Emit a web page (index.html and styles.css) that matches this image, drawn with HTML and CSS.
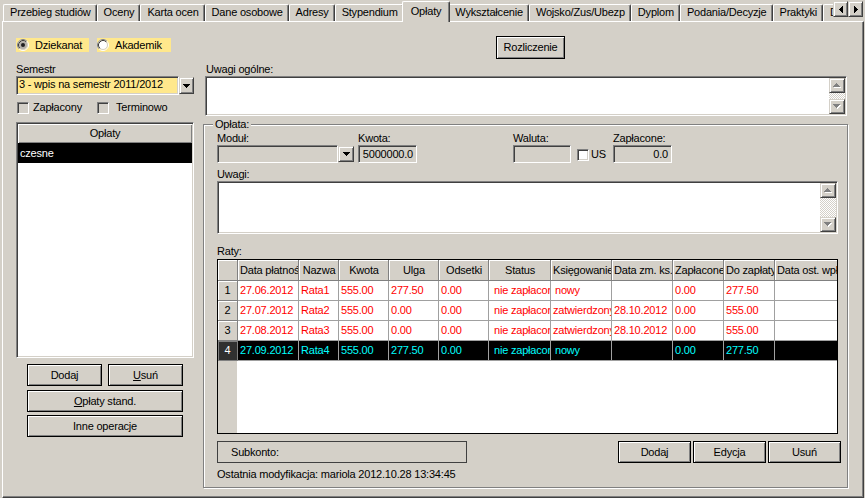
FILE: index.html
```html
<!DOCTYPE html>
<html lang="pl">
<head>
<meta charset="utf-8">
<title>Opłaty</title>
<link rel="stylesheet" href="styles.css">
</head>
<body>
<div class="app">
  <div class="tabbar">
    <div class="tablist">
      <div class="tab">Przebieg studiów</div>
      <div class="tab">Oceny</div>
      <div class="tab">Karta ocen</div>
      <div class="tab">Dane osobowe</div>
      <div class="tab">Adresy</div>
      <div class="tab">Stypendium</div>
      <div class="tab active">Opłaty</div>
      <div class="tab">Wykształcenie</div>
      <div class="tab">Wojsko/Zus/Ubezp</div>
      <div class="tab">Dyplom</div>
      <div class="tab">Podania/Decyzje</div>
      <div class="tab">Praktyki</div>
      <div class="tab">Dokumenty</div>
    </div>
    <div class="tabscroll">
      <div class="raised arrowbtn"><svg width="4" height="7" viewBox="0 0 4 7"><path d="M3 0h1v7H3zM2 1h1v5H2zM1 2h1v3H1zM0 3h1v1H0z"/></svg></div>
      <div class="raised arrowbtn"><svg width="4" height="7" viewBox="0 0 4 7"><path d="M0 0h1v7H0zM1 1h1v5H1zM2 2h1v3H2zM3 3h1v1H3z"/></svg></div>
    </div>
  </div>
  <div class="page">
    <div class="leftcol">
      <div class="radios">
        <div class="radio radio-dz">
          <svg class="rb" width="12" height="12" viewBox="0 0 12 12"><circle cx="6" cy="6" r="4.5" fill="#b4b0a8"/><circle cx="6" cy="6" r="5.5" fill="none" stroke="#fff"/><path d="M2.11 9.89A5.5 5.5 0 0 1 9.89 2.11" fill="none" stroke="#808080"/><circle cx="6" cy="6" r="4.5" fill="none" stroke="#d4d0c8"/><path d="M2.82 9.18A4.5 4.5 0 0 1 9.18 2.82" fill="none" stroke="#404040"/><circle cx="6" cy="6" r="2" fill="#202020"/></svg>
          <span>Dziekanat</span>
        </div>
        <div class="radio radio-ak">
          <svg class="rb" width="12" height="12" viewBox="0 0 12 12"><circle cx="6" cy="6" r="4.5" fill="#fff"/><circle cx="6" cy="6" r="5.5" fill="none" stroke="#fff"/><path d="M2.11 9.89A5.5 5.5 0 0 1 9.89 2.11" fill="none" stroke="#808080"/><circle cx="6" cy="6" r="4.5" fill="none" stroke="#d4d0c8"/><path d="M2.82 9.18A4.5 4.5 0 0 1 9.18 2.82" fill="none" stroke="#404040"/></svg>
          <span>Akademik</span>
        </div>
      </div>
      <div class="lbl sem-lbl">Semestr</div>
      <div class="combo combo-sem">
        <div class="sunken combo-field yellow">3 - wpis na semestr 2011/2012</div>
        <div class="raised combo-btn"><svg width="7" height="4" viewBox="0 0 7 4"><path d="M0 0h7v1H0zM1 1h5v1H1zM2 2h3v1H2zM3 3h1v1H3z"/></svg></div>
      </div>
      <div class="checks">
        <div class="check check-zap"><span class="sunken cbox"></span><span>Zapłacony</span></div>
        <div class="check"><span class="sunken cbox"></span><span>Terminowo</span></div>
      </div>
      <div class="sunken list">
        <div class="list-head">Opłaty</div>
        <div class="list-row selected">czesne</div>
      </div>
      <div class="btnrow">
        <div class="btn btn-half">Dodaj</div>
        <div class="btn btn-half"><u>U</u>suń</div>
      </div>
      <div class="btn btn-wide btn-stand"><u>O</u>płaty stand.</div>
      <div class="btn btn-wide btn-inne">Inne operacje</div>
    </div>

    <div class="rightcol">
      <div class="btn btn-rozl">Rozliczenie</div>
      <div class="lbl og-lbl">Uwagi ogólne:</div>
      <div class="sunken memo memo-og">
        <div class="vscroll">
          <div class="raised vs-btn"><svg width="8" height="5" viewBox="0 0 8 5"><path fill="#fff" d="M4 1h1v1H4zM3 2h3v1H3zM2 3h5v1H2zM1 4h7v1H1z"/><path fill="#808080" d="M3 0h1v1H3zM2 1h3v1H2zM1 2h5v1H1zM0 3h7v1H0z"/></svg></div>
          <div class="vs-track"></div>
          <div class="raised vs-btn"><svg width="8" height="5" viewBox="0 0 8 5"><path fill="#fff" d="M1 1h7v1H1zM2 2h5v1H2zM3 3h3v1H3zM4 4h1v1H4z"/><path fill="#808080" d="M0 0h7v1H0zM1 1h5v1H1zM2 2h3v1H2zM3 3h1v1H3z"/></svg></div>
        </div>
      </div>

      <div class="group">
        <div class="group-title">Opłata:</div>
        <div class="field-row">
          <div class="fblock">
            <div class="lbl">Moduł:</div>
            <div class="combo combo-mod">
              <div class="sunken combo-field"></div>
              <div class="raised combo-btn"><svg width="7" height="4" viewBox="0 0 7 4"><path d="M0 0h7v1H0zM1 1h5v1H1zM2 2h3v1H2zM3 3h1v1H3z"/></svg></div>
            </div>
          </div>
          <div class="fblock fb-kwota">
            <div class="lbl">Kwota:</div>
            <div class="sunken edit edit-kwota">5000000.0</div>
          </div>
          <div class="fblock fb-waluta">
            <div class="lbl">Waluta:</div>
            <div class="sunken edit edit-waluta"></div>
          </div>
          <div class="check check-us"><span class="sunken cbox white"></span><span>US</span></div>
          <div class="fblock">
            <div class="lbl">Zapłacone:</div>
            <div class="sunken edit edit-zap">0.0</div>
          </div>
        </div>

        <div class="lbl uw-lbl">Uwagi:</div>
        <div class="sunken memo memo-uw">
          <div class="vscroll">
            <div class="raised vs-btn"><svg width="8" height="5" viewBox="0 0 8 5"><path fill="#fff" d="M4 1h1v1H4zM3 2h3v1H3zM2 3h5v1H2zM1 4h7v1H1z"/><path fill="#808080" d="M3 0h1v1H3zM2 1h3v1H2zM1 2h5v1H1zM0 3h7v1H0z"/></svg></div>
            <div class="vs-track"></div>
            <div class="raised vs-btn"><svg width="8" height="5" viewBox="0 0 8 5"><path fill="#fff" d="M1 1h7v1H1zM2 2h5v1H2zM3 3h3v1H3zM4 4h1v1H4z"/><path fill="#808080" d="M0 0h7v1H0zM1 1h5v1H1zM2 2h3v1H2zM3 3h1v1H3z"/></svg></div>
          </div>
        </div>

        <div class="lbl raty-lbl">Raty:</div>
        <div class="grid">
          <div class="grow ghead">
            <div class="gc gh"></div>
            <div class="gc gh">Data płatności</div>
            <div class="gc gh">Nazwa</div>
            <div class="gc gh">Kwota</div>
            <div class="gc gh">Ulga</div>
            <div class="gc gh">Odsetki</div>
            <div class="gc gh">Status</div>
            <div class="gc gh">Księgowanie</div>
            <div class="gc gh">Data zm. ks.</div>
            <div class="gc gh">Zapłacone</div>
            <div class="gc gh">Do zapłaty</div>
            <div class="gc gh">Data ost. wpłaty</div>
          </div>
          <div class="grow">
            <div class="gc gi">1</div>
            <div class="gc">27.06.2012</div>
            <div class="gc">Rata1</div>
            <div class="gc">555.00</div>
            <div class="gc">277.50</div>
            <div class="gc">0.00</div>
            <div class="gc ind">nie zapłacono</div>
            <div class="gc ind2">nowy</div>
            <div class="gc"></div>
            <div class="gc">0.00</div>
            <div class="gc">277.50</div>
            <div class="gc"></div>
          </div>
          <div class="grow">
            <div class="gc gi">2</div>
            <div class="gc">27.07.2012</div>
            <div class="gc">Rata2</div>
            <div class="gc">555.00</div>
            <div class="gc">0.00</div>
            <div class="gc">0.00</div>
            <div class="gc ind">nie zapłacono</div>
            <div class="gc">zatwierdzony</div>
            <div class="gc">28.10.2012</div>
            <div class="gc">0.00</div>
            <div class="gc">555.00</div>
            <div class="gc"></div>
          </div>
          <div class="grow">
            <div class="gc gi">3</div>
            <div class="gc">27.08.2012</div>
            <div class="gc">Rata3</div>
            <div class="gc">555.00</div>
            <div class="gc">0.00</div>
            <div class="gc">0.00</div>
            <div class="gc ind">nie zapłacono</div>
            <div class="gc">zatwierdzony</div>
            <div class="gc">28.10.2012</div>
            <div class="gc">0.00</div>
            <div class="gc">555.00</div>
            <div class="gc"></div>
          </div>
          <div class="grow sel">
            <div class="gc gi">4</div>
            <div class="gc">27.09.2012</div>
            <div class="gc">Rata4</div>
            <div class="gc">555.00</div>
            <div class="gc">277.50</div>
            <div class="gc">0.00</div>
            <div class="gc ind">nie zapłacono</div>
            <div class="gc ind2">nowy</div>
            <div class="gc"></div>
            <div class="gc">0.00</div>
            <div class="gc">277.50</div>
            <div class="gc"></div>
          </div>
        </div>

        <div class="bottom-row">
          <div class="subkonto">Subkonto:</div>
          <div class="btn bbtn bbtn-first">Dodaj</div>
          <div class="btn bbtn">Edycja</div>
          <div class="btn bbtn">Usuń</div>
        </div>
        <div class="lbl footer">Ostatnia modyfikacja: mariola 2012.10.28 13:34:45</div>
      </div>
    </div>
  </div>
</div>
</body>
</html>
```

FILE: styles.css
```css
* { box-sizing: border-box; }
html, body { margin: 0; padding: 0; }
body {
  background: #d4d0c8;
  font: 11px/13px "Liberation Sans", Arial, sans-serif;
  letter-spacing: -0.2px;
  color: #000;
  width: 865px;
  height: 498px;
  overflow: hidden;
}
.app { width: 865px; height: 498px; display: flex; flex-direction: column; }

/* common 3D styles */
.raised {
  background: #d4d0c8;
  border: 1px solid;
  border-color: #d4d0c8 #404040 #404040 #d4d0c8;
  box-shadow: inset 1px 1px #fff, inset -1px -1px #808080;
  display: flex; align-items: center; justify-content: center;
}
.sunken {
  border: 1px solid;
  border-color: #808080 #fff #fff #808080;
  box-shadow: inset 1px 1px #404040, inset -1px -1px #d4d0c8;
}
.btn {
  background: #d4d0c8;
  border: 1px solid #000;
  box-shadow: inset 1px 1px #fff, inset -1px -1px #808080;
  display: flex; align-items: center; justify-content: center;
  white-space: nowrap;
  height: 22px;
}
.lbl { height: 13px; line-height: 13px; white-space: nowrap; }

/* tabs */
.tabbar { display: flex; height: 21px; flex: none; }
.tablist {
  display: flex; align-items: flex-end;
  flex: 1; min-width: 0; height: 22px;
  overflow: hidden; padding-left: 3px;
}
.tab {
  flex: none;
  height: 17px;
  margin-bottom: 1px;
  padding: 0 5px 0 6px;
  line-height: 15px;
  border: 1px solid #fff;
  border-bottom: 0;
  border-right-color: #404040;
  box-shadow: inset -1px 0 #808080;
  border-radius: 2px 2px 0 0;
  white-space: nowrap;
}
.tab.active {
  height: 21px;
  margin: 0 -2px;
  padding: 2px 8px 0;
  position: relative;
  z-index: 1;
  background: #d4d0c8;
}
.tabscroll { display: flex; flex: none; margin: 1px 2px 0 0; height: 16px; }
.arrowbtn { width: 15px; height: 16px; }

/* page */
.page {
  flex: none;
  width: 862px; height: 477px;
  margin-left: 2px;
  border: 1px solid #fff;
  border-right-color: #404040;
  border-bottom-color: #404040;
  box-shadow: inset -1px -1px #808080;
  display: flex;
  padding: 14px 0 0 13px;
}

/* left column */
.leftcol { width: 178px; flex: none; padding-top: 2px; display: flex; flex-direction: column; }
.radios { display: flex; gap: 8px; height: 14px; }
.radio {
  display: flex; align-items: center; gap: 6px;
  height: 14px; padding-left: 1px;
  background: #ffe88c;
  line-height: 14px;
}
.radio-dz { width: 73px; }
.radio-ak { width: 74px; padding-left: 0; }
.rb { flex: none; }
.sem-lbl { margin-top: 11px; }
.combo { display: flex; }
.combo-field {
  flex: 1; min-width: 0;
  background: #d4d0c8;
  padding-left: 2px;
  line-height: 15px;
  white-space: nowrap; overflow: hidden;
}
.combo-field.yellow { background: #ffe88c; }
.combo-sem { height: 19px; }
.combo-sem .combo-btn { width: 15px; height: 17px; margin: 1px 0; flex: none; }
.checks { display: flex; margin-top: 6px; height: 13px; }
.check { display: flex; align-items: center; gap: 4px; }
.check-zap { width: 81px; padding-left: 1px; }
.checks .check + .check span + span { margin-left: 3px; }
.cbox { width: 12px; height: 12px; flex: none; background: #d4d0c8; }
.cbox.white { background: #fff; }
.list {
  margin-top: 8px; height: 236px;
  background: #fff;
  padding: 1px;
  display: flex; flex-direction: column;
}
.list-head {
  height: 19px;
  background: #d4d0c8;
  box-shadow: inset 1px 1px #fff, inset -1px -1px #808080;
  display: flex; align-items: center; justify-content: center;
}
.list-row { height: 20px; line-height: 20px; padding-left: 2px; }
.list-row.selected { background: #000; color: #fff; }
.btnrow { display: flex; gap: 6px; margin: 6px 0 0 11px; }
.btn-half { width: 75px; }
.btn-wide { width: 156px; margin-left: 11px; }
.btn-stand { margin-top: 4px; }
.btn-inne { margin-top: 3px; }

/* right column */
.rightcol { width: 645px; flex: none; margin-left: 9px; display: flex; flex-direction: column; }
.btn-rozl { margin-left: 293px; width: 69px; height: 23px; }
.og-lbl { margin: 4px 0 0 3px; }
.memo { background: #fff; padding: 1px; display: flex; justify-content: flex-end; }
.memo-og { margin-left: 2px; width: 642px; height: 40px; }
.vscroll { width: 16px; display: flex; flex-direction: column; }
.vs-btn { height: 15px; flex: none; }
.vs-track {
  flex: 1;
  background-image: repeating-conic-gradient(#fff 0 25%, #d4d0c8 0 50%);
  background-size: 2px 2px;
}

.group {
  margin-top: 8px;
  height: 364px;
  position: relative;
  border: 1px solid #808080;
  box-shadow: inset 1px 1px #fff, 1px 1px #fff;
  padding: 7px 0 0 13px;
}
.group-title {
  position: absolute; top: -7px; left: 9px;
  padding: 0 2px;
  background: #d4d0c8;
  line-height: 13px;
}
.field-row { display: flex; align-items: flex-end; height: 31px; }
.fblock { display: flex; flex-direction: column; }
.combo-mod { width: 137px; height: 18px; }
.combo-mod .combo-btn { width: 16px; height: 16px; margin: 1px 0; flex: none; }
.edit {
  height: 18px;
  background: #d4d0c8;
  display: flex; align-items: center; justify-content: flex-end;
  padding-right: 3px;
  white-space: nowrap; overflow: hidden;
}
.fb-kwota { margin-left: 4px; }
.edit-kwota { width: 59px; }
.fb-waluta { margin-left: 96px; }
.edit-waluta { width: 58px; }
.check-us { margin: 0 0 2px 6px; width: 36px; gap: 2px; }
.edit-zap { width: 59px; }
.uw-lbl { margin-top: 5px; }
.memo-uw { width: 621px; height: 53px; }
.raty-lbl { margin-top: 11px; height: 14px; }

/* grid */
.grid {
  width: 621px; height: 175px;
  border: 1px solid #000;
  background: linear-gradient(to right, #d4d0c8 19px, #fff 19px);
  overflow: hidden;
}
.grow {
  display: grid;
  grid-template-columns: 20px 61px 40px 50px 50px 50px 62px 61px 61px 51px 51px 62px;
  height: 20px;
  background: #fff;
}
.ghead { height: 21px; background: #d4d0c8; }
.gc {
  border-right: 1px solid #a0a0a0;
  border-bottom: 1px solid #a0a0a0;
  padding-left: 2px;
  white-space: nowrap;
  overflow: hidden;
  line-height: 19px;
  color: #f00;
}
.gc:last-child { border-right: 0; }
.gc.ind { padding-left: 5px; }
.gc.ind2 { padding-left: 4px; }
.gh {
  background: #d4d0c8;
  color: #000;
  border-color: #808080;
  box-shadow: inset 1px 1px #fff;
  text-align: center;
  padding: 0 1px 0 2px;
  line-height: 20px;
}
.gi {
  background: #d4d0c8;
  color: #000;
  border-color: #808080;
  box-shadow: inset 1px 1px #fff;
  text-align: center;
  padding: 0;
}
.grow.sel .gc { background: #000; color: #0ff; }
.grow.sel .gi { background: #303030; color: #fff; box-shadow: inset 1px 1px #808080; }

.bottom-row { display: flex; width: 624px; height: 22px; margin-top: 7px; }
.subkonto {
  width: 250px;
  border: 1px solid #404040;
  display: flex; align-items: center;
  padding-left: 13px;
}
.bbtn { width: 73px; margin-left: 2px; }
.bbtn-first { margin-left: auto; }
.footer { margin-top: 5px; }
```
